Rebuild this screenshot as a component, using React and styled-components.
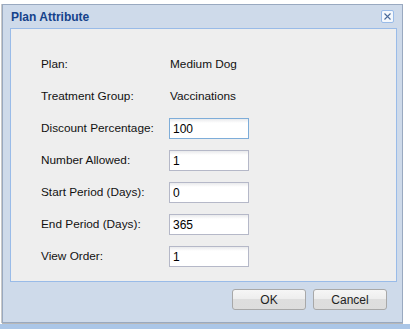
import React from "react";
import styled, { createGlobalStyle } from "styled-components";

const GlobalStyle = createGlobalStyle`
  html, body {
    margin: 0;
    padding: 0;
    background: #ffffff;
  }
  body {
    font-family: "Liberation Sans", Arial, sans-serif;
    font-size: 12px;
    color: #000;
  }
`;

const Page = styled.div`
  width: 410px;
  height: 329px;
  display: flex;
  flex-direction: column;
  overflow: hidden;
`;

const Window = styled.div`
  margin: 4px 0 0 2px;
  width: 387px;
  height: 317px;
  border: 1px solid #99a9c0;
  box-shadow: -1px 0 0 #c8c8c8, 0 1px 0 #b8b8b8;
  background: #cedaea;
  display: flex;
  flex-direction: column;
  padding: 0 5px 0 7px;
  box-sizing: content-box;
`;

const Header = styled.div`
  height: 23px;
  display: flex;
  align-items: center;
  justify-content: space-between;
`;

const Title = styled.span`
  font-weight: bold;
  font-size: 12px;
  color: #15428b;
  padding-left: 1px;
`;

const CloseButton = styled.button`
  width: 13px;
  height: 13px;
  margin-right: 3px;
  padding: 0;
  border: 1px solid #99bbe8;
  border-radius: 2px;
  background: #f4f8fd;
  display: flex;
  align-items: center;
  justify-content: center;
`;

const Body = styled.div`
  border: 1px solid #99bbe8;
  background: #eeeeee;
  padding: 19px 0 0 30px;
  box-sizing: border-box;
  height: 254px;
`;

const Row = styled.div`
  display: grid;
  grid-template-columns: 128px 1fr;
  align-items: center;
  height: 32px;
`;

const Label = styled.span`
  color: #111;
  font-size: 11.8px;
`;

const Value = styled.span`
  padding-left: 1px;
  color: #111;
  font-size: 11.8px;
`;

const Field = styled.input`
  width: 80px;
  height: 21px;
  box-sizing: border-box;
  border: 1px solid ${(props) => (props.focused ? "#7eadd9" : "#b5b8c8")};
  background: linear-gradient(#e9eaec 0, #ffffff 4px, #ffffff 100%);
  font-family: "Liberation Sans", Arial, sans-serif;
  font-size: 12px;
  color: #000;
  padding: 1px 3px 0;
  outline: none;
`;

const Footer = styled.div`
  display: flex;
  justify-content: flex-end;
  gap: 7px;
  padding: 7px 10px 0 0;
`;

const Button = styled.button`
  width: 74px;
  height: 21px;
  border: 1px solid #a8a8a8;
  border-radius: 3px;
  background: linear-gradient(#f6f6f6 0, #ededed 50%, #dedede 50%, #dddddd 100%);
  font-family: "Liberation Sans", Arial, sans-serif;
  font-size: 12px;
  color: #222;
  padding: 0;
`;

const BottomStrip = styled.div`
  flex: 1;
  margin-top: 1px;
  background: #abc6e7;
`;

const rows = [
  { label: "Plan:", value: "Medium Dog" },
  { label: "Treatment Group:", value: "Vaccinations" },
  { label: "Discount Percentage:", input: "100", focused: true },
  { label: "Number Allowed:", input: "1" },
  { label: "Start Period (Days):", input: "0" },
  { label: "End Period (Days):", input: "365" },
  { label: "View Order:", input: "1" },
];

const App = () => {
  return (
    <Page>
      <GlobalStyle />
      <Window>
        <Header>
          <Title>Plan Attribute</Title>
          <CloseButton aria-label="Close">
            <svg width="9" height="9" viewBox="0 0 9 9">
              <path d="M1.5 1.5 L7.5 7.5 M7.5 1.5 L1.5 7.5" stroke="#4a6a9a" strokeWidth="1.1" />
            </svg>
          </CloseButton>
        </Header>
        <Body>
          {rows.map((r) => (
            <Row key={r.label}>
              <Label>{r.label}</Label>
              {r.input !== undefined ? (
                <Field defaultValue={r.input} focused={r.focused} />
              ) : (
                <Value>{r.value}</Value>
              )}
            </Row>
          ))}
        </Body>
        <Footer>
          <Button>OK</Button>
          <Button>Cancel</Button>
        </Footer>
      </Window>
      <BottomStrip />
    </Page>
  );
};

export default App;
